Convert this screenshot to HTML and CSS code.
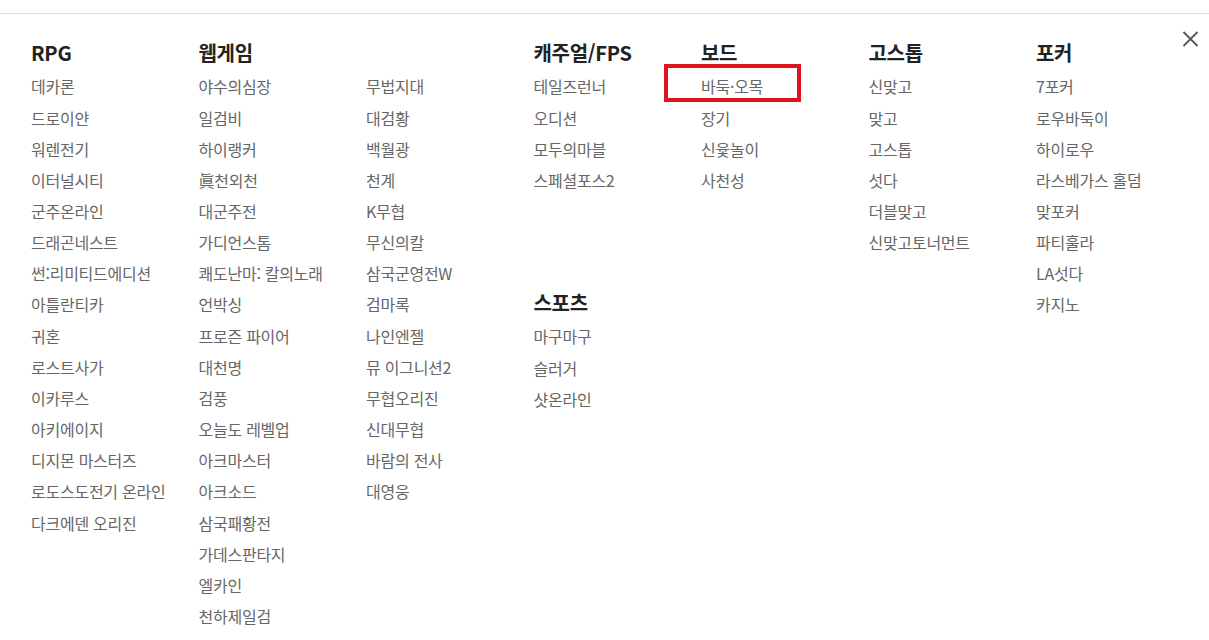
FILE: index.html
```html
<!DOCTYPE html>
<html lang="ko">
<head>
<meta charset="utf-8">
<title>게임 전체보기</title>
<link rel="stylesheet" href="styles.css">
</head>
<body>
<div class="topbar"></div>
<div class="menu">
  <button class="close" aria-label="닫기">
    <svg width="16" height="16" viewBox="0 0 16 16"><path d="M1 1 L15 15 M15 1 L1 15" stroke="#555" stroke-width="1.8" fill="none"/></svg>
  </button>
  <div class="grid">
    <section class="col">
      <h3 class="title">RPG</h3>
      <ul class="list">
        <li>데카론</li><li>드로이얀</li><li>워렌전기</li><li>이터널시티</li><li>군주온라인</li><li>드래곤네스트</li><li>썬:리미티드에디션</li><li>아틀란티카</li><li>귀혼</li><li>로스트사가</li><li>이카루스</li><li>아키에이지</li><li>디지몬 마스터즈</li><li>로도스도전기 온라인</li><li>다크에덴 오리진</li>
      </ul>
    </section>
    <section class="col span2">
      <h3 class="title">웹게임</h3>
      <div class="pair">
        <ul class="list">
          <li>야수의심장</li><li>일검비</li><li>하이랭커</li><li>眞천외천</li><li>대군주전</li><li>가디언스톰</li><li>쾌도난마: 칼의노래</li><li>언박싱</li><li>프로즌 파이어</li><li>대천명</li><li>검풍</li><li>오늘도 레벨업</li><li>아크마스터</li><li>아크소드</li><li>삼국패황전</li><li>가데스판타지</li><li>엘카인</li><li>천하제일검</li>
        </ul>
        <ul class="list">
          <li>무법지대</li><li>대검황</li><li>백월광</li><li>천계</li><li>K무협</li><li>무신의칼</li><li>삼국군영전W</li><li>검마록</li><li>나인엔젤</li><li>뮤 이그니션2</li><li>무협오리진</li><li>신대무협</li><li>바람의 전사</li><li>대영웅</li>
        </ul>
      </div>
    </section>
    <section class="col">
      <h3 class="title">캐주얼/FPS</h3>
      <ul class="list">
        <li>테일즈런너</li><li>오디션</li><li>모두의마블</li><li>스페셜포스2</li>
      </ul>
      <h3 class="title sub">스포츠</h3>
      <ul class="list">
        <li>마구마구</li><li>슬러거</li><li>샷온라인</li>
      </ul>
    </section>
    <section class="col">
      <h3 class="title">보드</h3>
      <ul class="list">
        <li class="marked">바둑·오목</li><li>장기</li><li>신윷놀이</li><li>사천성</li>
      </ul>
    </section>
    <section class="col">
      <h3 class="title">고스톱</h3>
      <ul class="list">
        <li>신맞고</li><li>맞고</li><li>고스톱</li><li>섯다</li><li>더블맞고</li><li>신맞고토너먼트</li>
      </ul>
    </section>
    <section class="col">
      <h3 class="title">포커</h3>
      <ul class="list">
        <li>7포커</li><li>로우바둑이</li><li>하이로우</li><li>라스베가스 홀덤</li><li>맞포커</li><li>파티훌라</li><li>LA섯다</li><li>카지노</li>
      </ul>
    </section>
  </div>
</div>
</body>
</html>
```
FILE: styles.css
```css
*, *::before, *::after { box-sizing: border-box; }
html, body {
  margin: 0;
  padding: 0;
  background: #fff;
  font-family: "Noto Sans CJK KR", "Noto Sans", sans-serif;
}
.topbar {
  height: 14px;
  border-bottom: 1px solid #dcdcdc;
}
.menu {
  position: relative;
  padding: 24px 0 0 31px;
}
.close {
  position: absolute;
  top: 17px;
  right: 10px;
  width: 17px;
  height: 16px;
  padding: 0;
  border: 0;
  background: none;
  display: block;
}
.close svg { display: block; width: 17px; height: 16px; }
.grid {
  display: grid;
  grid-template-columns: repeat(7, 167.5px);
}
.span2 { grid-column: span 2; }
.pair {
  display: grid;
  grid-template-columns: 167.5px 167.5px;
}
.title {
  margin: 0 0 3.4px;
  font-size: 20px;
  line-height: 30px;
  font-weight: 700;
  color: #222;
  letter-spacing: -0.3px;
}
.title.sub { margin-top: 92px; }
.list {
  list-style: none;
  margin: 0;
  padding: 0;
}
.list li {
  font-size: 16px;
  line-height: 31.15px;
  color: #666;
  letter-spacing: -0.25px;
  white-space: nowrap;
}
.marked {
  position: relative;
}
.marked::after {
  content: "";
  position: absolute;
  left: -37px;
  top: -7px;
  width: 137px;
  height: 38px;
  border: 4px solid #e0141e;
}
```
